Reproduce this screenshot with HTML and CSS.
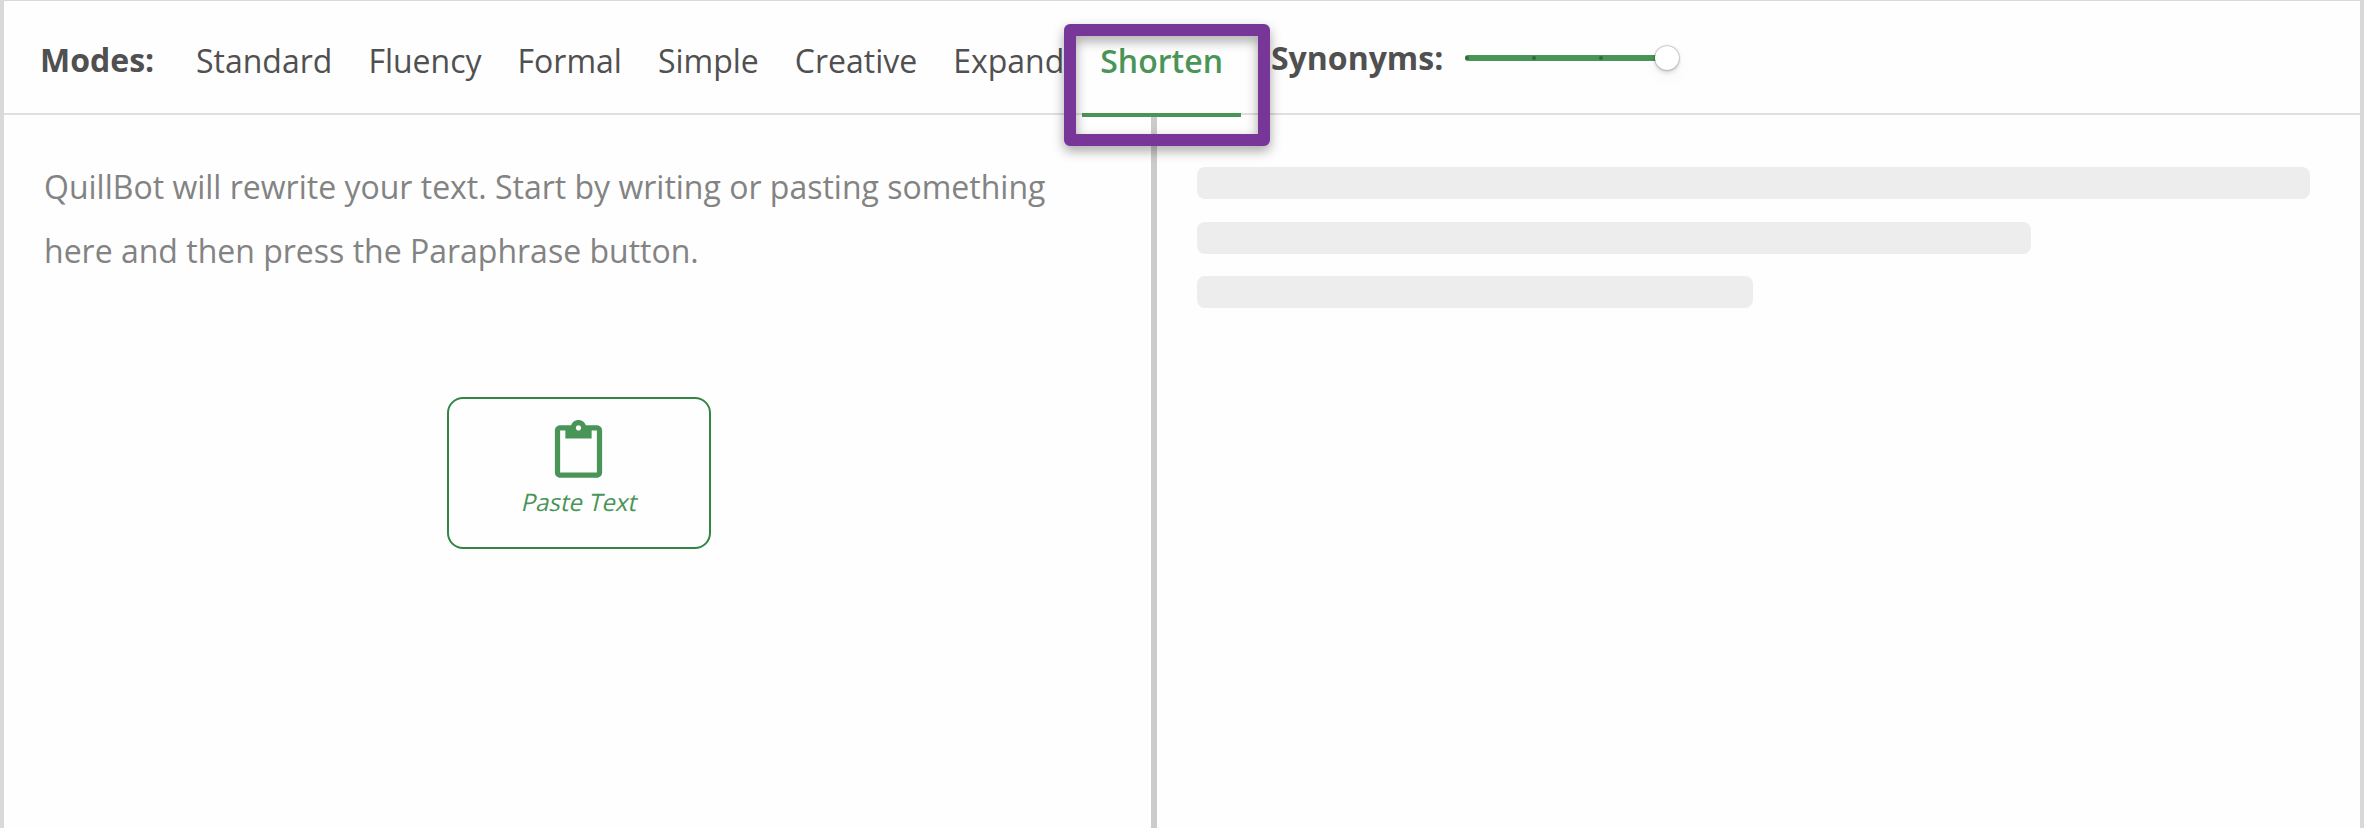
FILE: index.html
```html
<!DOCTYPE html>
<html lang="en">
<head>
    <meta charset="UTF-8">
    <title>Paraphraser</title>
    <link rel="stylesheet" href="styles.css">
</head>
<body>
    <div class="card">
        <div class="toolbar">
            <span class="label modes-label">Modes:</span>
            <div class="tabs">
                <div class="tab">Standard</div>
                <div class="tab">Fluency</div>
                <div class="tab">Formal</div>
                <div class="tab">Simple</div>
                <div class="tab">Creative</div>
                <div class="tab">Expand</div>
                <div class="tab active">Shorten<div class="highlight"></div></div>
            </div>
            <span class="label synonyms-label">Synonyms:</span>
            <div class="slider">
                <span class="tick"></span>
                <span class="tick"></span>
                <span class="tick"></span>
                <span class="thumb"></span>
            </div>
        </div>
        <div class="panes">
            <div class="pane input-pane">
                <p class="placeholder">QuillBot will rewrite your text. Start by writing or pasting something here and then press the Paraphrase button.</p>
                <button class="paste">
                    <svg class="paste-icon" viewBox="0 0 24 24">
                        <path d="M19 2h-4.18C14.4.84 13.3 0 12 0c-1.3 0-2.4.84-2.82 2H5c-1.1 0-2 .9-2 2v16c0 1.1.9 2 2 2h14c1.1 0 2-.9 2-2V4c0-1.1-.9-2-2-2zm-7 0c.55 0 1 .45 1 1s-.45 1-1 1-1-.45-1-1 .45-1 1-1zm7 18H5V4h2v3h10V4h2v16z"/>
                    </svg>
                    <span class="paste-text">Paste Text</span>
                </button>
            </div>
            <div class="pane output-pane">
                <div class="bar"></div>
                <div class="bar medium"></div>
                <div class="bar short"></div>
            </div>
        </div>
    </div>
</body>
</html>
```
FILE: styles.css
```css
* {
    box-sizing: border-box;
}
body {
    margin: 0;
    height: 100vh;
    padding: 1px 4px 0;
    overflow: hidden;
    font-family: "Open Sans", sans-serif;
    font-size: 32px;
    color: #505050;
    background-color: #d9d9d9;
}
.card {
    display: flex;
    flex-direction: column;
    height: 100%;
    background-color: #fefefe;
}
.toolbar {
    display: flex;
    height: 114px;
    padding-left: 36px;
    border-bottom: 2px solid #e0e0e0;
}
.label {
    font-weight: 700;
    line-height: 44px;
}
.modes-label {
    width: 138px;
    padding-top: 37px;
}
.tabs {
    display: flex;
}
.tab {
    height: 116px;
    padding: 38px 18px 0;
    line-height: 44px;
}
.tab.active {
    position: relative;
    z-index: 1;
    font-weight: 600;
    color: #499557;
    border-bottom: 4px solid #499557;
}
.highlight {
    position: absolute;
    left: -18px;
    top: 23px;
    width: 206px;
    height: 122px;
    border: 12px solid #773698;
    border-radius: 6px;
    filter: drop-shadow(0 5px 6px rgba(0, 0, 0, 0.35));
}
.synonyms-label {
    padding-top: 35px;
    margin-left: 30px;
}
.slider {
    display: flex;
    justify-content: space-between;
    align-items: center;
    width: 204px;
    height: 6px;
    margin: 54px 0 0 22px;
    border-radius: 3px;
    background-color: #499557;
}
.tick {
    width: 4px;
    height: 4px;
    border-radius: 50%;
    background-color: #35693f;
}
.thumb {
    width: 24px;
    height: 24px;
    margin: 0 -10px;
    flex-shrink: 0;
    border-radius: 50%;
    background-color: #fff;
    box-shadow: 0 0 2px rgba(0, 0, 0, 0.6), 0 3px 4px rgba(0, 0, 0, 0.12), 0 8px 18px rgba(0, 0, 0, 0.04);
}
.panes {
    display: flex;
    flex: 1;
}
.input-pane {
    display: flex;
    flex-direction: column;
    align-items: center;
    width: 1153px;
    padding: 40px 38px 0 40px;
    border-right: 6px solid #cbcbcb;
}
.placeholder {
    width: 100%;
    margin: 0;
    line-height: 64px;
    color: #838383;
}
.paste {
    display: flex;
    flex-direction: column;
    align-items: center;
    width: 264px;
    height: 152px;
    margin-top: 114px;
    padding: 21px 0 0;
    border: 2px solid #338545;
    border-radius: 16px;
    font-family: inherit;
    font-size: 24px;
    line-height: 32px;
    color: #499557;
    background-color: #fefefe;
}
.paste-icon {
    width: 63px;
    height: 63px;
    fill: #499557;
}
/* slanted upright letters, not the italic face */
.paste-text {
    padding: 3px 0 0 5px;
    transform: skewX(-13deg);
}
.output-pane {
    display: flex;
    flex: 1;
    flex-direction: column;
    gap: 22.5px;
    padding: 52px 50px 0 40px;
}
.bar {
    height: 32px;
    border-radius: 8px;
    background-color: #ededed;
}
.bar.medium {
    width: 74.95%;
}
.bar.short {
    width: 49.95%;
}
```
